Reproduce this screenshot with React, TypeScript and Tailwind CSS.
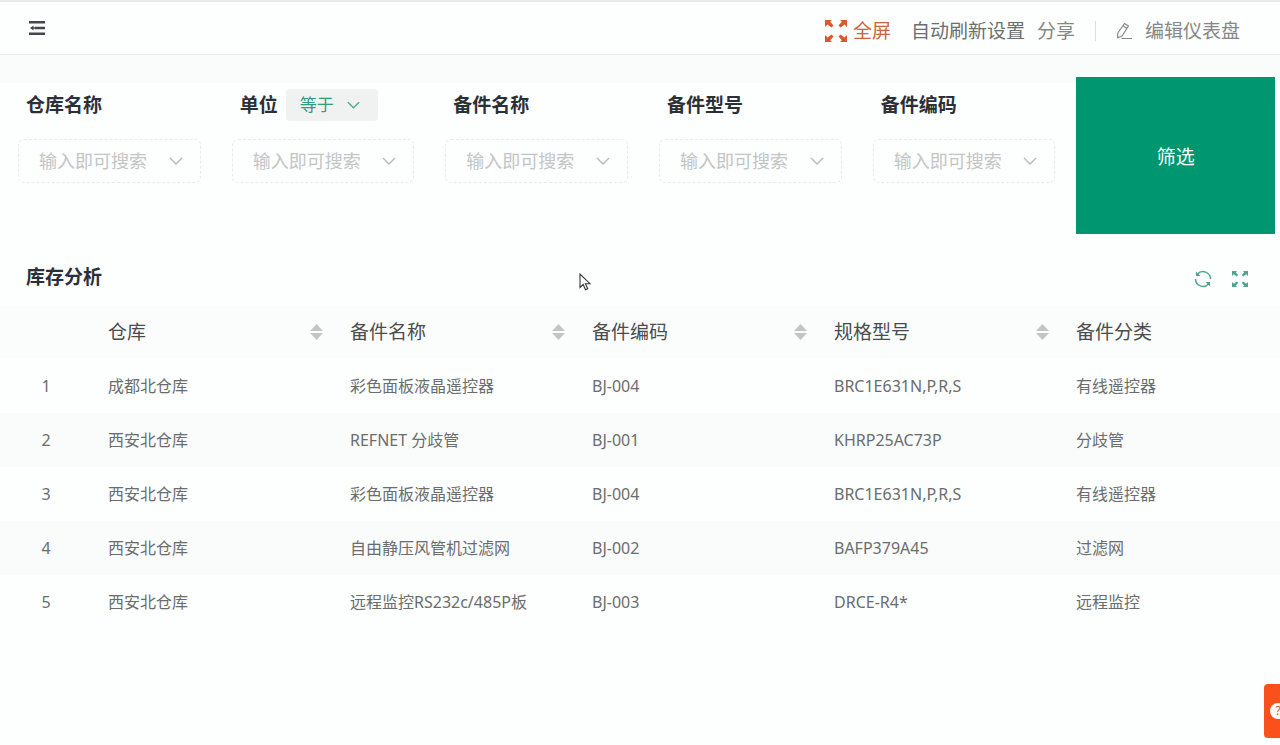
import React from 'react';

const filters = [
  { id: 'warehouse', label: '仓库名称' },
  { id: 'unit', label: '单位', operator: '等于' },
  { id: 'part-name', label: '备件名称' },
  { id: 'part-model', label: '备件型号' },
  { id: 'part-code', label: '备件编码' },
];

const columns = [
  { title: '仓库', sortable: true },
  { title: '备件名称', sortable: true },
  { title: '备件编码', sortable: true },
  { title: '规格型号', sortable: true },
  { title: '备件分类', sortable: false },
];

const rows = [
  ['成都北仓库', '彩色面板液晶遥控器', 'BJ-004', 'BRC1E631N,P,R,S', '有线遥控器'],
  ['西安北仓库', 'REFNET 分歧管', 'BJ-001', 'KHRP25AC73P', '分歧管'],
  ['西安北仓库', '彩色面板液晶遥控器', 'BJ-004', 'BRC1E631N,P,R,S', '有线遥控器'],
  ['西安北仓库', '自由静压风管机过滤网', 'BJ-002', 'BAFP379A45', '过滤网'],
  ['西安北仓库', '远程监控RS232c/485P板', 'BJ-003', 'DRCE-R4*', '远程监控'],
];

const MenuIcon = () => (
  <svg className="w-4 h-[14px]" viewBox="0 0 16 14" fill="#44484b">
    <path d="M0 0h16v2.500H0zM6 5.800h10v2.400H6zM0 11.500h16V14H0zM1 7l3.500-2.600v5.200zM4 6.200h3v1.600H4z" />
  </svg>
);

const ExpandIcon = ({ className }: { className: string }) => (
  <svg className={className} viewBox="0 0 22 22" fill="currentColor">
    <path d="M0 0h7L5.200 1.800 8.500 5.500 6.500 7.500 2.500 4.500 0 7z" />
    <path d="M22 0h-7l1.800 1.800-3.300 3.700 2 2 4-3L22 7z" />
    <path d="M0 22h7l-1.800-1.800 3.300-3.700-2-2-4 3L0 15z" />
    <path d="M22 22h-7l1.800-1.800-3.300-3.700 2-2 4 3L22 15z" />
  </svg>
);

const PencilIcon = () => (
  <svg className="w-[17px] h-[18px]" viewBox="0 0 17 18" fill="none" stroke="currentColor" strokeWidth="1.200" strokeLinejoin="round">
    <path d="M8.500 1.500l4 2.500-6.500 10-4.500 1.800.3-4.800zM7 4l4 2.600M5.500 16.500H16" />
  </svg>
);

const RefreshIcon = () => (
  <svg className="w-[18px] h-[18px]" viewBox="0 0 18 18" fill="none" stroke="currentColor" strokeWidth="1.500">
    <path d="M3.500 4A7.500 7.500 0 0 1 16.500 9M14.500 14A7.500 7.500 0 0 1 1.500 9" />
    <path d="M2 1.500v4.500h4.500zM16 16.500V12h-4.500z" fill="currentColor" stroke="none" />
  </svg>
);

const ChevronIcon = ({ className }: { className: string }) => (
  <svg className={className} viewBox="0 0 14 8" fill="none" stroke="currentColor" strokeWidth="1.300">
    <path d="M1 1l6 6 6-6" />
  </svg>
);

const SortIcon = () => (
  <svg className="w-[13px] h-4" viewBox="0 0 13 16" fill="#c3c5c5">
    <path d="M6.500 0L13 7H0zM6.500 16L13 9H0z" />
  </svg>
);

const TopBar = () => (
  <header className="flex items-center justify-between h-[55px] pl-[29px] pr-10 bg-[#fdfefe] border-t-2 border-t-[#e9eaea] border-b border-b-[#e8eaea]">
    <button aria-label="菜单">
      <MenuIcon />
    </button>
    <div className="flex items-center pt-[6px] text-[19px] leading-7 text-[#858888]">
      <button className="flex items-center gap-[6px] text-[#d0623f]">
        <ExpandIcon className="w-[22px] h-[22px] text-[#dc5630]" />
        全屏
      </button>
      <button className="ml-5 text-[#6c6f6f]">自动刷新设置</button>
      <button className="ml-3">分享</button>
      <span className="w-px h-5 ml-5 bg-[#dcdede]"></span>
      <button className="flex items-center gap-3 ml-5">
        <PencilIcon />
        编辑仪表盘
      </button>
    </div>
  </header>
);

const FilterField = ({ id, label, operator }: { id: string; label: string; operator?: string }) => (
  <div className="pl-[10px] pr-[6px] pt-3">
    <div className="flex items-center gap-2 h-8 pl-2">
      <label htmlFor={id} className="text-[19px] leading-7 font-bold text-[#2b3036]">{label}</label>
      {operator && (
        <div className="relative">
          <select
            aria-label="条件"
            className="appearance-none block w-[92px] h-8 pl-[14px] rounded-sm bg-[#f0f1f1] text-[17px] text-[#2f9c7f]"
          >
            <option>{operator}</option>
          </select>
          <ChevronIcon className="absolute right-[18px] top-3 w-[13px] h-2 text-[#4aa58d] pointer-events-none" />
        </div>
      )}
    </div>
    <div className="flex items-center h-11 mt-[18px] pl-5 pr-[17px] rounded-md border border-dashed border-[#e9ebeb]">
      <input
        id={id}
        placeholder="输入即可搜索"
        className="flex-1 min-w-0 text-[18px] leading-7 bg-transparent outline-none text-[#666] placeholder:text-[#c3c5c5]"
      />
      <ChevronIcon className="w-[14px] h-2 text-[#b5b8b8]" />
    </div>
  </div>
);

const StockTable = () => (
  <section className="mt-[27px]">
    <div className="flex items-center justify-between h-8 pl-[26px] pr-8">
      <h2 className="text-[19px] leading-7 font-bold text-[#2b3036]">库存分析</h2>
      <div className="flex items-center gap-5 pt-1 text-[#4fa58f]">
        <button aria-label="刷新"><RefreshIcon /></button>
        <button aria-label="全屏"><ExpandIcon className="w-4 h-4" /></button>
      </div>
    </div>
    <table className="w-full mt-3 table-fixed text-left">
      <thead>
        <tr className="h-[54px] bg-[#fbfcfc]">
          <th className="w-[92px]"></th>
          {columns.map((col) => (
            <th key={col.title} className="w-[242px] last:w-auto pl-4 pr-[11px] text-[19px] font-normal text-[#4a4d4d]">
              <div className="flex items-center justify-between">
                {col.title}
                {col.sortable && (
                  <button aria-label={`${col.title}排序`}><SortIcon /></button>
                )}
              </div>
            </th>
          ))}
        </tr>
      </thead>
      <tbody>
        {rows.map((row, i) => (
          <tr key={i} className="h-[54px] text-base text-[#6a6d6d] even:bg-[#fafbfb]">
            <td className="text-center">{i + 1}</td>
            {row.map((cell, j) => (
              <td key={j} className="pl-4 whitespace-nowrap">{cell}</td>
            ))}
          </tr>
        ))}
      </tbody>
    </table>
  </section>
);

const App: React.FC = () => {
  return (
    <div className="relative min-h-screen overflow-hidden bg-[#fdfefe] font-['Noto_Sans','Noto_Sans_CJK_SC',sans-serif]">
      <TopBar />
      <main>
        <form className="grid grid-cols-6 gap-[15px] pt-[22px] pl-2 pr-[5px] bg-[linear-gradient(#fafbfb_28px,#fdfefe_28px)]">
          {filters.map((f) => (
            <FilterField key={f.id} {...f} />
          ))}
          <button type="button" className="h-[157px] pt-1 bg-[#009770] text-[19px] text-white">筛选</button>
        </form>
        <StockTable />
      </main>

      {/* Help tab */}
      <button
        aria-label="帮助"
        className="fixed right-0 bottom-[7px] flex items-center w-4 h-[54px] pl-[6px] rounded-l-sm bg-[#f9501c] overflow-hidden"
      >
        <span className="flex items-center justify-center shrink-0 w-4 h-4 rounded-full bg-white text-xs text-[#f9501c]">?</span>
      </button>

      {/* Mouse pointer */}
      <svg className="absolute left-[579px] top-[273px] w-3 h-[18px] pointer-events-none" viewBox="0 0 12 18" fill="#fff" stroke="#333" strokeWidth="1.100">
        <path d="M1 1v13.500l3.200-3 2.300 5.200 2.200-1-2.300-5H11z" />
      </svg>
    </div>
  );
};

export default App;
